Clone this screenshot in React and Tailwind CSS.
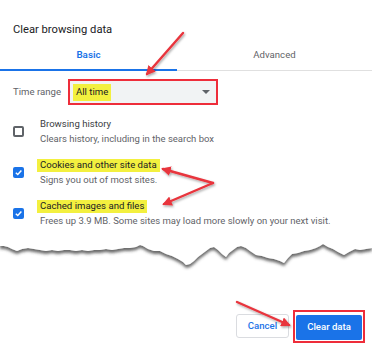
import React from "react";

const font = { fontFamily: "Roboto, 'Liberation Sans', sans-serif" };

function Check({ checked }) {
  if (!checked) {
    return <div className="w-[11px] h-[11px] rounded-[2px] border-2 border-[#5f6368]" />;
  }
  return (
    <div className="w-[11px] h-[11px] rounded-[2px] bg-[#1a73e8] flex items-center justify-center">
      <svg width="9" height="9" viewBox="0 0 10 10">
        <path d="M2 5.2 L4.2 7.3 L8.2 2.8" fill="none" stroke="white" strokeWidth="1.6" />
      </svg>
    </div>
  );
}

function Row({ checked, title, sub, mark }) {
  return (
    <div className="flex items-start h-[41px]">
      <div className="w-[40px] pl-[13px] pt-[9px]">
        <Check checked={checked} />
      </div>
      <div className="flex flex-col">
        <div className="h-[14px] flex items-center">
          <span
            className={
              mark
                ? "bg-[#f3f03f] -ml-[3px] px-[3px] h-[13px] flex items-center text-[#202124] text-[9.6px]"
                : "text-[#3c4043] text-[9.6px]"
            }
          >
            {title}
          </span>
        </div>
        <div className="h-[16px] flex items-center text-[9.5px] text-[#5f6368]">{sub}</div>
      </div>
    </div>
  );
}

export default function App() {
  return (
    <div className="relative w-[372px] h-[360px] bg-white overflow-hidden" style={font}>
      {/* Title */}
      <div className="pt-[22px] pl-[13px] h-[41px] text-[11.2px] text-[#202124]">Clear browsing data</div>

      {/* Tabs */}
      <div className="flex h-[30px] border-b border-[#e0e0e0]">
        <div className="w-[177px] flex items-center justify-center border-b-2 border-[#1a73e8] -mb-px text-[9.8px] font-semibold text-[#1a73e8]">
          Basic
        </div>
        <div className="flex-1 flex items-center justify-center text-[9.6px] text-[#5f6368]">Advanced</div>
      </div>

      {/* Time range */}
      <div className="flex items-center h-[26px] mt-[8px] pl-[13px]">
        <span className="w-[55px] text-[9.6px] text-[#5f6368]">Time range</span>
        <div className="w-[150px] h-[26px] border-2 border-[#ee2d3a] bg-[#f1f3f4] flex items-center pl-[3px] pr-[6px]">
          <span className="bg-[#f3f03f] h-[17px] px-[3px] flex items-center text-[9.6px] text-[#202124]">All time</span>
          <div className="flex-1" />
          <div className="w-0 h-0 border-l-[4px] border-r-[4px] border-t-[4px] border-l-transparent border-r-transparent border-t-[#5f6368]" />
        </div>
      </div>

      {/* Items */}
      <div className="mt-[12px] flex flex-col">
        <Row checked={false} title="Browsing history" sub="Clears history, including in the search box" />
        <Row checked title="Cookies and other site data" sub="Signs you out of most sites." mark />
        <Row checked title="Cached images and files" sub="Frees up 3.9 MB. Some sites may load more slowly on your next visit." mark />
      </div>

      {/* Torn edge */}
      <svg width="372" height="34" viewBox="0 0 372 34" className="block -mt-[3px]">
        <defs>
          <filter id="sh" x="-5%" y="-50%" width="110%" height="200%">
            <feDropShadow dx="0" dy="3" stdDeviation="1.6" floodColor="#444" floodOpacity="0.8" />
          </filter>
        </defs>
        <path
          filter="url(#sh)"
          fill="white"
          d="M0 0 L372 0 L372 11 L366 12 L360 13 L355 12 L349 15 L344 18 L338 15 L333 12 L328 10 L323 7 L320 9 L316 11 L310 13 L304 14 L298 16 L292 17 L288 21 L284 26 L280 24 L274 22 L268 21 L262 19 L256 18 L250 14 L246 11 L241 9 L237 10 L233 13 L229 16 L226 20 L222 17 L218 13 L214 10 L210 11 L206 14 L202 17 L198 20 L194 24 L190 27 L186 28 L183 25 L178 22 L172 19 L166 17 L160 14 L154 14 L148 12 L143 9 L140 8 L136 10 L130 11 L124 11 L118 12 L112 13 L106 12 L100 13 L94 13 L88 14 L82 13 L76 14 L70 13 L64 13 L58 14 L52 13 L46 14 L40 13 L34 12 L28 11 L22 12 L17 14 L12 12 L8 10 L4 9 L0 9 Z"
        />
      </svg>

      {/* Buttons */}
      <div className="flex justify-end items-center gap-[4px] pr-[7px] mt-[39px]">
        <button className="w-[53px] h-[24px] rounded-[3px] border border-[#dadce0] bg-white text-[9.6px] font-medium text-[#1a73e8]">
          Cancel
        </button>
        <div className="border-2 border-[#ee2d3a] p-px">
          <button className="w-[66px] h-[25px] rounded-[2px] bg-[#1a73e8] text-[9.6px] font-medium text-white">
            Clear data
          </button>
        </div>
      </div>

      {/* Annotation arrows */}
      <svg className="absolute inset-0 pointer-events-none" width="372" height="360" viewBox="0 0 372 360">
        <defs>
          <marker id="ah" viewBox="0 0 10 10" refX="8" refY="5" markerWidth="4" markerHeight="4" orient="auto">
            <path d="M0 0 L10 5 L0 10 Z" fill="#e8343c" />
          </marker>
          <filter id="ash" x="-20%" y="-20%" width="140%" height="140%">
            <feDropShadow dx="1" dy="1.5" stdDeviation="1" floodColor="#000" floodOpacity="0.35" />
          </filter>
        </defs>
        <g filter="url(#ash)" stroke="#e8343c" strokeWidth="2.4" fill="none" strokeLinecap="round">
          <line x1="183" y1="33" x2="147" y2="74" markerEnd="url(#ah)" />
          <line x1="213" y1="183" x2="163" y2="169" markerEnd="url(#ah)" />
          <line x1="213" y1="183" x2="164" y2="204" markerEnd="url(#ah)" />
          <line x1="237" y1="302" x2="289" y2="325" markerEnd="url(#ah)" />
        </g>
      </svg>
    </div>
  );
}
